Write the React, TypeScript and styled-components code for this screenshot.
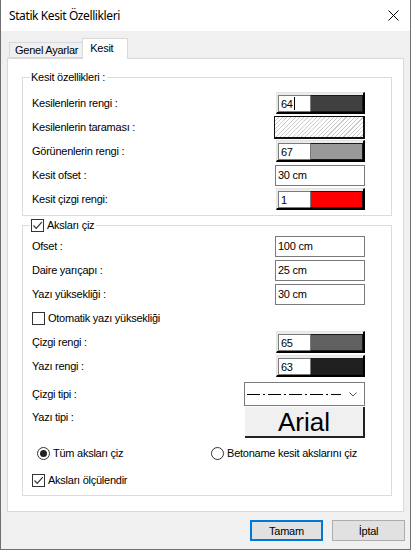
import styled, { createGlobalStyle } from "styled-components";

const GlobalStyle = createGlobalStyle`
  html, body {
    margin: 0;
    padding: 0;
    background: #ffffff;
  }
  * {
    box-sizing: border-box;
  }
`;

const Window = styled.div`
  width: 411px;
  height: 550px;
  display: flex;
  flex-direction: column;
  background: #f0f0f0;
  border: 1px solid #707070;
  border-top: none;
  font-family: "Liberation Sans", Arial, sans-serif;
  font-size: 11px;
  letter-spacing: -0.25px;
  color: #000;
`;

const TitleBar = styled.div`
  height: 31px;
  flex-shrink: 0;
  display: flex;
  align-items: center;
  justify-content: space-between;
  padding: 0 11px 0 8px;
  background: #fff;
`;

const Title = styled.span`
  font-family: "Noto Sans", "Open Sans", sans-serif;
  font-size: 12px;
  letter-spacing: -0.4px;
  color: #000;
`;

const CloseButton = styled.svg`
  width: 11px;
  height: 11px;
`;

const Body = styled.div`
  flex: 1;
  display: flex;
  flex-direction: column;
  padding: 7px 6px 0 6px;
`;

const TabStrip = styled.div`
  height: 20px;
  display: flex;
  align-items: flex-end;
  padding-left: 2px;
`;

const Tab = styled.div<{ $active?: boolean }>`
  display: flex;
  align-items: center;
  height: ${(p) => (p.$active ? "21px" : "16px")};
  padding: ${(p) => (p.$active ? "0 14px 2px 7px" : "0 4px 0 5px")};
  background: ${(p) => (p.$active ? "#fff" : "#f0f0f0")};
  border: 1px solid #d9d9d9;
  border-bottom: ${(p) => (p.$active ? "none" : "1px solid #d9d9d9")};
  border-right: ${(p) => (p.$active ? "1px solid #d9d9d9" : "none")};
  margin-bottom: ${(p) => (p.$active ? "-1px" : "0")};
  position: relative;
  z-index: ${(p) => (p.$active ? 1 : 0)};
`;

const TabPanel = styled.div`
  width: 397px;
  height: 454px;
  display: flex;
  flex-direction: column;
  background: #fff;
  border: 1px solid #d9d9d9;
  padding: 0 11px 0 14px;
`;

const GroupBox = styled.fieldset<{ $top: number; $padTop: number; $padBottom: number }>`
  margin: ${(p) => p.$top}px 0 0 0;
  padding: ${(p) => p.$padTop}px 26px ${(p) => p.$padBottom}px 9px;
  border: 1px solid #dcdcdc;
  min-width: 0;
  display: flex;
  flex-direction: column;
`;

const Legend = styled.legend`
  display: flex;
  align-items: center;
  gap: 3px;
  height: 14px;
  margin-left: -2px;
  padding: 0 2px 0 1px;
  line-height: 14px;
`;

const Row = styled.div<{ $height?: number; $top?: number; $align?: string }>`
  display: flex;
  justify-content: space-between;
  align-items: ${(p) => p.$align ?? "center"};
  height: ${(p) => p.$height ?? 24}px;
  margin-top: ${(p) => p.$top ?? 0}px;
`;

const Label = styled.span<{ $padTop?: number }>`
  padding-top: ${(p) => p.$padTop ?? 0}px;
  white-space: nowrap;
`;

const TextInput = styled.div`
  width: 90px;
  height: 21px;
  display: flex;
  align-items: center;
  padding-left: 2px;
  border: 1px solid #7a7a7a;
  background: #fff;
`;

const ColorField = styled.div`
  width: 89px;
  height: 22px;
  display: flex;
  padding: 2px 0 0 1px;
  background: #ececec;
  border-top: 1px solid #e3e3e3;
  border-left: 1px solid #e3e3e3;
  border-right: 2px solid #000;
  border-bottom: 2px solid #000;
`;

const ColorCode = styled.div`
  width: 32px;
  display: flex;
  align-items: center;
  padding-left: 2px;
  background: #fff;
  border: 1px solid #7a7a7a;
  border-right: none;
`;

const Caret = styled.span`
  display: inline-block;
  width: 1px;
  height: 13px;
  margin-left: 1px;
  background: #000;
`;

const Swatch = styled.div<{ $color: string }>`
  flex: 1;
  background: ${(p) => p.$color};
  border: 1px solid #1a1a1a;
  border-left-color: #7a7a7a;
`;

// fine diagonal hatch, thin light-grey strokes
const HatchField = styled.div`
  width: 91px;
  height: 23px;
  border: 1px solid #111;
  border-right-width: 2px;
  border-bottom-width: 2px;
  background-color: #fff;
  background-image: repeating-linear-gradient(
    135deg,
    #fff 0px,
    #fff 2.2px,
    #cacaca 2.2px,
    #cacaca 3px
  );
`;

const ComboBox = styled.div`
  width: 121px;
  height: 24px;
  display: flex;
  align-items: center;
  justify-content: space-between;
  padding: 0 7px 0 2px;
  border: 1px solid #7a7a7a;
  background: #fff;
`;

const FontButton = styled.div`
  width: 120px;
  height: 31px;
  display: flex;
  align-items: center;
  justify-content: center;
  background: #f0f0f0;
  border-right: 2px solid #222;
  border-bottom: 2px solid #222;
  font-family: "Liberation Sans", Arial, sans-serif;
  font-size: 26px;
  letter-spacing: 0;
  padding-top: 1px;
`;

const Choice = styled.label<{ $indent?: number }>`
  display: flex;
  align-items: center;
  gap: 3px;
  margin-left: ${(p) => p.$indent ?? 0}px;
`;

const CheckBoxBox = styled.span`
  width: 13px;
  height: 13px;
  display: inline-flex;
  align-items: center;
  justify-content: center;
  border: 1px solid #333;
  background: #fff;
  flex-shrink: 0;
`;

const RadioCircle = styled.span`
  width: 13px;
  height: 13px;
  display: inline-flex;
  align-items: center;
  justify-content: center;
  border: 1px solid #333;
  border-radius: 50%;
  background: #fff;
  flex-shrink: 0;
`;

const RadioDot = styled.span`
  width: 7px;
  height: 7px;
  border-radius: 50%;
  background: #222;
`;

const RadioRow = styled.div`
  display: flex;
  align-items: center;
  justify-content: space-between;
  height: 14px;
  margin-top: 8px;
  padding: 0 8px 0 5px;
`;

const Footer = styled.div`
  display: flex;
  justify-content: flex-end;
  gap: 9px;
  margin-top: 8px;
  margin-right: -1px;
`;

const DialogButton = styled.button<{ $primary?: boolean }>`
  width: 73px;
  height: 21px;
  padding: 0;
  background: #e1e1e1;
  border: ${(p) => (p.$primary ? "2px solid #0078d7" : "1px solid #adadad")};
  font-family: "Liberation Sans", Arial, sans-serif;
  font-size: 11px;
  letter-spacing: -0.25px;
  color: #000;
`;

const CheckMark = () => (
  <svg width="11" height="11" viewBox="0 0 11 11">
    <path d="M1.5 5.5 L4.2 8.3 L9.8 2.2" fill="none" stroke="#333" strokeWidth="1.2" />
  </svg>
);

const CheckBox = ({ checked }: { checked?: boolean }) => (
  <CheckBoxBox>{checked && <CheckMark />}</CheckBoxBox>
);

const Radio = ({ checked }: { checked?: boolean }) => (
  <RadioCircle>{checked && <RadioDot />}</RadioCircle>
);

const ColorPicker = ({ code, color, caret }: { code: string; color: string; caret?: boolean }) => (
  <ColorField>
    <ColorCode>
      {code}
      {caret && <Caret />}
    </ColorCode>
    <Swatch $color={color} />
  </ColorField>
);

const LineTypeCombo = () => (
  <ComboBox>
    <svg width="94" height="3" viewBox="0 0 94 3">
      <line x1="0" y1="1.5" x2="94" y2="1.5" stroke="#000" strokeWidth="1" strokeDasharray="13 3 2 3" />
    </svg>
    <svg width="8" height="5" viewBox="0 0 8 5">
      <path d="M0.5 0.5 L4 4 L7.5 0.5" fill="none" stroke="#555" strokeWidth="1" />
    </svg>
  </ComboBox>
);

export default function App() {
  return (
    <>
      <GlobalStyle />
      <Window>
        <TitleBar>
          <Title>Statik Kesit Özellikleri</Title>
          <CloseButton viewBox="0 0 11 11">
            <path d="M0.5 0.5 L10.5 10.5 M10.5 0.5 L0.5 10.5" stroke="#000" strokeWidth="1" />
          </CloseButton>
        </TitleBar>

        <Body>
          <TabStrip>
            <Tab>Genel Ayarlar</Tab>
            <Tab $active>Kesit</Tab>
          </TabStrip>

          <TabPanel>
            <GroupBox $top={11} $padTop={7} $padBottom={4}>
              <Legend>Kesit özellikleri :</Legend>
              <Row>
                <Label>Kesilenlerin rengi :</Label>
                <ColorPicker code="64" color="#404040" caret />
              </Row>
              <Row>
                <Label>Kesilenlerin taraması :</Label>
                <HatchField />
              </Row>
              <Row>
                <Label>Görünenlerin rengi :</Label>
                <ColorPicker code="67" color="#999999" />
              </Row>
              <Row>
                <Label>Kesit ofset :</Label>
                <TextInput>30 cm</TextInput>
              </Row>
              <Row>
                <Label>Kesit çizgi rengi:</Label>
                <ColorPicker code="1" color="#ff0000" />
              </Row>
            </GroupBox>

            <GroupBox $top={2} $padTop={2} $padBottom={8}>
              <Legend>
                <CheckBox checked />
                Aksları çiz
              </Legend>
              <Row>
                <Label>Ofset :</Label>
                <TextInput>100 cm</TextInput>
              </Row>
              <Row>
                <Label>Daire yarıçapı :</Label>
                <TextInput>25 cm</TextInput>
              </Row>
              <Row>
                <Label>Yazı yüksekliği :</Label>
                <TextInput>30 cm</TextInput>
              </Row>
              <Row>
                <Choice>
                  <CheckBox />
                  Otomatik yazı yüksekliği
                </Choice>
              </Row>
              <Row>
                <Label>Çizgi rengi :</Label>
                <ColorPicker code="65" color="#606060" />
              </Row>
              <Row>
                <Label>Yazı rengi :</Label>
                <ColorPicker code="63" color="#202020" />
              </Row>
              <Row $top={4}>
                <Label>Çizgi tipi :</Label>
                <LineTypeCombo />
              </Row>
              <Row $top={1} $height={31} $align="flex-start">
                <Label $padTop={4}>Yazı tipi :</Label>
                <FontButton>Arial</FontButton>
              </Row>
              <RadioRow>
                <Choice>
                  <Radio checked />
                  Tüm aksları çiz
                </Choice>
                <Choice>
                  <Radio />
                  Betoname kesit akslarını çiz
                </Choice>
              </RadioRow>
              <Row $top={13} $height={14}>
                <Choice>
                  <CheckBox checked />
                  Aksları ölçülendir
                </Choice>
              </Row>
            </GroupBox>
          </TabPanel>

          <Footer>
            <DialogButton $primary>Tamam</DialogButton>
            <DialogButton>İptal</DialogButton>
          </Footer>
        </Body>
      </Window>
    </>
  );
}
